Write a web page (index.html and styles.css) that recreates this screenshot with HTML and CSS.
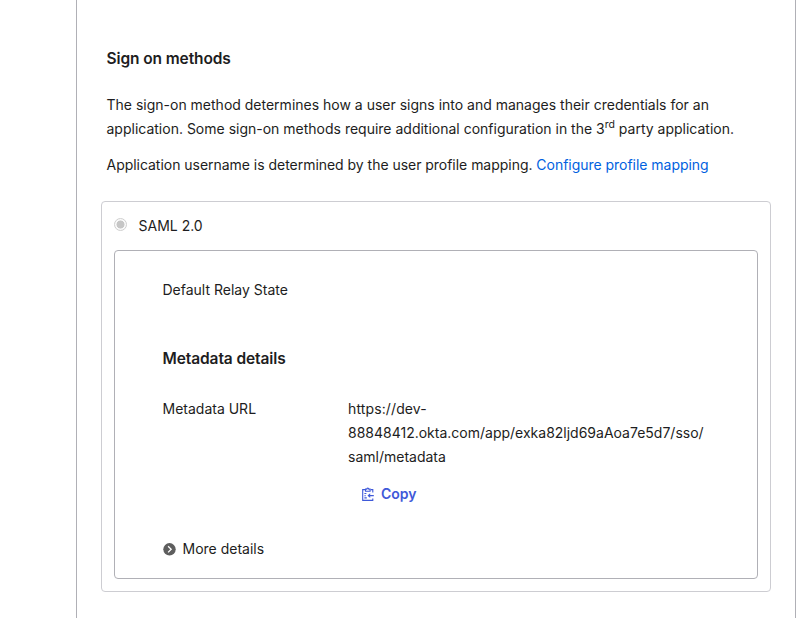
FILE: index.html
```html
<!DOCTYPE html>
<html lang="en">
<head>
<meta charset="utf-8">
<title>Sign on methods</title>
<link rel="stylesheet" href="styles.css">
</head>
<body>
<main class="panel">
  <h2 class="title">Sign on methods</h2>
  <p class="intro">The sign-on method determines how a user signs into and manages their credentials for an<br>application. Some sign-on methods require additional configuration in the 3<sup>rd</sup> party application.</p>
  <p class="mapping">Application username is determined by the user profile mapping. <a class="link">Configure profile mapping</a></p>
  <section class="method">
    <div class="method-head"><span class="radio"></span><span>SAML 2.0</span></div>
    <div class="details">
      <div class="relay">Default Relay State</div>
      <h3 class="title meta-title">Metadata details</h3>
      <div class="row">
        <div class="label">Metadata URL</div>
        <div class="value"><span class="host">https://dev-</span><br>88848412.okta.com/app/exka82ljd69aAoa7e5d7/sso/<br>saml/metadata</div>
      </div>
      <div class="copy">
        <svg width="14" height="14" viewBox="0 0 14 14" fill="none" stroke="currentColor" stroke-width="1.1"><path d="M4 2.6H1.7v10.8h10.1v-2M9.6 2.6h2.2v3"/><path d="M4.5 4.2V2.1h1.3a1 1 0 0 1 2 0h1.3v2.1z"/><path d="M3.4 6.5h2M3.4 8.7h1.4M3.4 10.9h2.4M12.8 8.6H7"/><path d="M9.2 6.2v4.8L6.5 8.6z" fill="currentColor" stroke="none"/></svg>
        <span>Copy</span>
      </div>
      <div class="more">
        <svg width="13" height="13" viewBox="0 0 13 13"><circle cx="6.5" cy="6.3" r="6.2" fill="#5e5e5e"/><path d="M5.1 3.2 8.2 6.3 5.1 9.4" fill="none" stroke="#fff" stroke-width="1.3"/></svg>
        <span>More details</span>
      </div>
    </div>
  </section>
</main>
</body>
</html>
```

FILE: styles.css
```css
* { box-sizing: border-box; }
body { margin: 0; background: #fff; color: #1d1d21; font: 14px/24px Inter, sans-serif; }
.panel { height: 618px; margin-left: 76px; padding: 47px 24px 0; border: solid #b0b0b6; border-width: 0 1px; overflow: hidden; }
.title { margin: 0 0 0 5.5px; font-size: 15.5px; line-height: 24px; font-weight: 600; letter-spacing: -0.1px; }
.intro { margin: 22px 0 0 5.5px; white-space: nowrap; }
sup { font-size: 10.5px; line-height: 0; vertical-align: baseline; position: relative; top: -6px; }
.mapping { margin: 12px 0 0 5.5px; white-space: nowrap; letter-spacing: -0.03px; }
.link { color: #0061e0; }
.method { width: 670px; height: 391px; margin-top: 24px; padding: 12px; border: 1px solid #cdcdd2; border-radius: 4px; }
.method-head { display: flex; gap: 11.5px; height: 36px; }
.radio { width: 13px; height: 13px; margin-top: 4px; border: 1px solid #cfcfcf; border-radius: 50%; background: radial-gradient(circle, #c6c6c6 3.7px, #fafafa 4.3px); }
.details { height: 329px; padding: 27px 47.5px; border: 1px solid #b0b0b6; border-radius: 4px; }
.meta-title { margin: 45px 0 0; }
.row { display: flex; margin-top: 26px; white-space: nowrap; }
.label { width: 185.5px; }
.host { letter-spacing: 0.12px; }
.copy { display: flex; align-items: center; gap: 6px; margin: 13px 0 0 198.5px; color: #3f59d9; font-weight: 600; }
.more { display: flex; align-items: center; gap: 7px; margin-top: 31px; }
```
